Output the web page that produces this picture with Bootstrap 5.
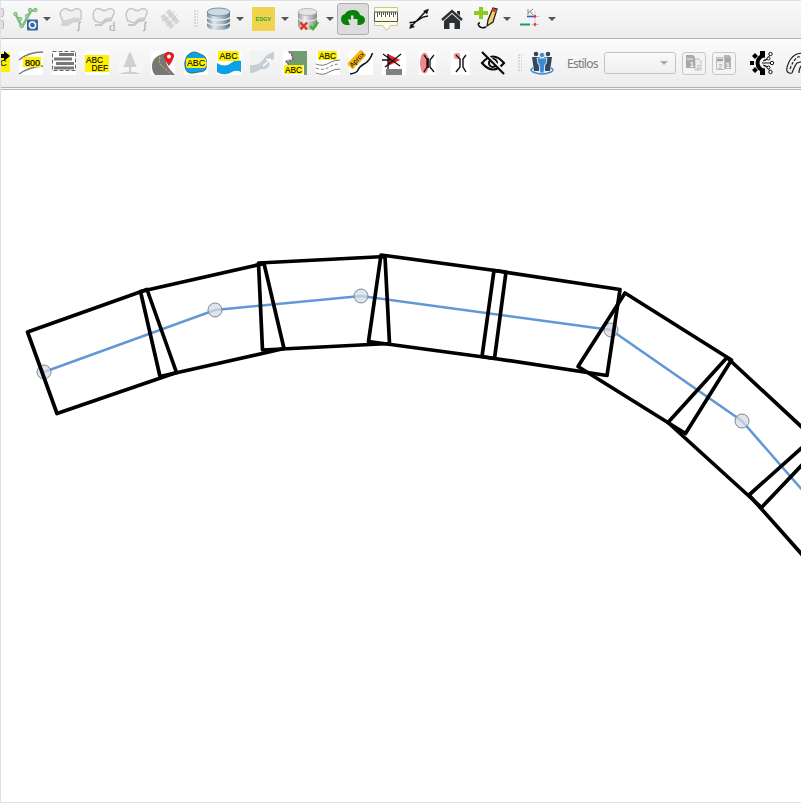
<!DOCTYPE html>
<html lang="pt">
<head>
<meta charset="utf-8">
<title>Mapa</title>
<link href="https://cdn.jsdelivr.net/npm/bootstrap@5.3.0/dist/css/bootstrap.min.css" rel="stylesheet">
<style>
body{width:801px;height:803px;overflow:hidden;background:#fff;font-family:"Noto Sans","Open Sans",sans-serif}
.frame{height:803px;border:solid #dee2e6;border-width:1px 0 1px 1px}
.bar{background:linear-gradient(#fafafa,#ececec);border-bottom:1px solid #b3b3b3;white-space:nowrap}
.bar-a{height:38px;padding-bottom:1px}
.bar-b{height:49px;background:linear-gradient(#fbfbfb,#ededed)}
.rule{height:2px;background:#f6f6f6;border-bottom:1px solid #b3b3b3}
.bar svg{display:block;flex:none;overflow:visible}
.slot{width:33px;flex:none}
.drop{width:45px;flex:none}
.drop::after{content:"";border:4px solid transparent;border-top:4px solid #555;border-bottom:0;margin-left:5px}
.drop-far{padding-left:1px}
.grip{height:18px;width:4px;flex:none;background:radial-gradient(circle at 1px 1px,#b5b5b5 0.6px,transparent 0.8px) 0 0/3px 3px}
.lead-a{width:13px;flex:none}
.lead-b{margin-left:-15px}
.grip-a{margin:0 9px 0 3px}
.grip-b{margin:0 8px 0 4px}
.pressed{width:32px;height:32px;flex:none;border:1px solid #b0b0b0;border-radius:3px;background:#dcdcdc;margin:0 5px 0 -5px}
.tool-label{font-size:12px;color:#777b84;width:37px;letter-spacing:-.75px;line-height:16px;padding-top:1px;flex:none}
.combo{width:72px;height:22px;flex:none;border:1px solid #c3c3c3;border-radius:3px;background:linear-gradient(#fafafa,#efefef);padding-right:7px}
.combo::after{content:"";border:4px solid transparent;border-top:4px solid #aaa;border-bottom:0}
.sq{width:24px;height:23px;flex:none;border:1px solid #c8c8c8;border-radius:3px;margin-left:6px;background:#f4f4f4}
.canvas{display:block}
text{font-family:"Liberation Sans",sans-serif}
</style>
<script src="https://cdn.jsdelivr.net/npm/bootstrap@5.3.0/dist/js/bootstrap.bundle.min.js"></script>
</head>
<body>
<main class="frame overflow-hidden">
<div class="bar bar-a d-flex align-items-center overflow-hidden">
 <div class="lead-a"><svg width="4" height="24" fill="#e0e0e0" stroke="#bbb"><path d="M0 1.500h1.500q1 0 1 1v6q0 1-1 1H0M0 13.500h1.500q1 0 1 1v6q0 1-1 1H0"/></svg></div>
 <div class="drop d-flex align-items-center"><svg width="24" height="24"><g fill="none" stroke="#7fbd82" stroke-width="2.600"><path d="M2 8l6 12M8 20l6-11 3-5 5-1"/><g fill="#c4e2c6" stroke-width="1.300"><circle cx="1.500" cy="7" r="1.500"/><circle cx="6" cy="12" r="1.500"/><circle cx="7.500" cy="19" r="1.500"/><circle cx="13" cy="9" r="1.500"/><circle cx="16" cy="3" r="1.500"/><circle cx="21.500" cy="3" r="1.500"/></g></g><rect x="13" y="12.500" width="11" height="11" rx="1" fill="#3767a3"/><path d="M15.500 20v-3.500l1.500-1.500h3l1 2M21.500 16v3.500l-1.500 1.500h-3l-1-1.500" fill="none" stroke="#fff" stroke-width="1.500"/></svg></div>
 <div class="slot"><svg width="24" height="24"><path d="M2 4Q5 0 9 2.500t7-.5q7-1 6 4 1 6-2 8l-7 1-4 3H3q2-3 0-6-3-4-1-8z" fill="#f0f0f0" stroke="#c6c6c6" stroke-width="1.500"/><path d="M4 13q6 0 9-2 3-1 8 0l-1 3-7 1-4 3H3z" fill="#d4d4d4"/><path d="M22 15.500q-2-1-2 2v4q0 2.500-2 2" fill="none" stroke="#aaa" stroke-width="1.200"/></svg></div>
 <div class="slot"><svg width="24" height="24"><path d="M2 4Q5 0 9 2.500t7-.5q7-1 6 4l-2 5-6 1-5 4-6-2Q0 9 2 4z" fill="#f2f2f2" stroke="#c6c6c6" stroke-width="1.500"/><path d="M3 18l6 0 5-4 6-1" fill="none" stroke="#c6c6c6" stroke-width="2"/><text x="17" y="24" font-size="13" style="font-family:'Liberation Serif',serif" fill="#aaa">d</text></svg></div>
 <div class="slot"><svg width="24" height="24"><path d="M2 4Q5 0 9 2.500t7-.5q7-1 6 4l-2 5-6 1-5 4-6-2Q0 9 2 4z" fill="#f2f2f2" stroke="#c6c6c6" stroke-width="1.500"/><path d="M3 18l6 0 5-4 6-1" fill="none" stroke="#c6c6c6" stroke-width="2"/><path d="M22 15.500q-2-1-2 2v4q0 2.500-2 2" fill="none" stroke="#aaa" stroke-width="1.200"/></svg></div>
 <div class="slot"><svg width="24" height="24"><g transform="translate(1 0) rotate(-40 11 12)"><path d="M5 4h5v16H5zM12 4h5v16h-5z" fill="#d6d7d4"/><path d="M3 8l8 2 9-1M3 15l8 0 8-2" fill="none" stroke="#c6c8c3" stroke-width=".8"/></g></svg></div>
 <div class="grip grip-a"></div>
 <div class="drop d-flex align-items-center"><svg width="24" height="24"><defs><linearGradient id="db"><stop stop-color="#758b9b"/><stop offset=".3" stop-color="#dfe8ed"/><stop offset=".65" stop-color="#a7b9c4"/><stop offset="1" stop-color="#5a7080"/></linearGradient></defs><path d="M0 5v14q1 4 11.500 4T23 19V5z" fill="url(#db)"/><path d="M0 10q1 3 11.500 3T23 10M0 15q1 3 11.500 3T23 15" fill="none" stroke="#e7eef2" stroke-width="1.300"/><ellipse cx="11.500" cy="5" rx="11.300" ry="4" fill="#cbdbe4" stroke="#7c919f"/></svg></div>
 <div class="drop d-flex align-items-center"><svg width="24" height="24"><rect width="23" height="24" fill="#f0d44e"/><text x="3.500" y="14" font-size="5.500" font-weight="700" fill="#2da33a" textLength="15.500">EDGV</text></svg></div>
 <div class="drop d-flex align-items-center"><svg width="24" height="24"><defs><linearGradient id="dg"><stop stop-color="#999"/><stop offset=".35" stop-color="#eee"/><stop offset="1" stop-color="#888"/></linearGradient></defs><g transform="translate(1)"><path d="M0 5v14q1 4 9.500 4T19 19V5z" fill="url(#dg)"/><path d="M0 11q1 3 9.500 3t9.500-3" fill="none" stroke="#f2f2f2"/><ellipse cx="9.500" cy="5" rx="9.500" ry="3.500" fill="#e4e4e4" stroke="#aaa" stroke-width=".8"/><path d="M2.500 15.500l6.500 7M9 15.500l-6.500 7" stroke="#e2351c" stroke-width="2.500"/><path d="M12 19l3 3 5-7" stroke="#3fb52a" stroke-width="2.500" fill="none"/></g></svg></div>
 <div class="pressed d-flex align-items-center justify-content-center"><svg width="24" height="24"><path d="M5 18q-5-1-5-6 0-4 4-5Q6 3 12 3q6 0 7 5 5 1 5 5 0 4-5 5z" fill="#078207"/><path d="M9 21v-3l-2-5 1-1 2 1V8.500h2.500V12h4v5l-1 4z" fill="#dcdcdc"/></svg></div>
 <div class="slot"><svg width="24" height="24"><path d="M.5.500h23v18h-7l-4 5-4-5h-8z" fill="#ffffdf" stroke="#c5c5a0"/><path d="M.5 5h23v9.500H.500z" fill="#fffff0" stroke="#555"/><path d="M3.500 5v5M5.500 5v3M7.500 5v5M9.500 5v3M11.500 5v5M13.500 5v3M15.500 5v5M17.500 5v3M19.500 5v5M21.500 5v3" stroke="#555"/></svg></div>
 <div class="slot"><svg width="24" height="24" fill="none" stroke="#111" stroke-width="1.500"><path d="M4 20q2-3 6-6.500L19 4M2.500 15.500q6 0 9.500-3t9-3.500"/><path d="M21.500 2l-5 2 3.500 3zM2.500 21.500l1.500-5 3.500 3.500z" fill="#111" stroke-width=".4"/></svg></div>
 <div class="slot"><svg width="24" height="24"><path d="M2 13L12 4l10 9" fill="none" stroke="#2b2f33" stroke-width="2.400"/><path d="M4 14l8-7 8 7v8h-5.500v-6h-5v6H4zM17 4h3v5l-3-3z" fill="#2b2f33"/></svg></div>
 <div class="drop drop-far d-flex align-items-center"><svg width="24" height="24"><path d="M13 19l1-6 5-12 4 1-4 13z" fill="#f4cf62" stroke="#222" stroke-width="1.300"/><path d="M19 1l4 2-1 3-4-2z" fill="#c84837"/><path d="M12 20q-5 2-7-1t1-3" fill="none" stroke="#111" stroke-width="1.500"/><path d="M5 0h4v4h5v4H9v4H5V8H0V4h5z" fill="#8bcb22"/></svg></div>
 <div class="drop drop-far d-flex align-items-center"><svg width="24" height="24"><path d="M9 2v6M14 2l-5 4M11 4l3 4" stroke="#888" stroke-width="1"/><path d="M8 9.500h8" stroke="#2358ed" stroke-width="1.600"/><path d="M16 9.500h5M16 4v16M12 17.500h8" stroke="#bbb" stroke-width=".7"/><circle cx="16" cy="9.500" r="1.400" fill="#ef3344"/><circle cx="16" cy="17.500" r="1.400" fill="#ef3344"/><path d="M1 17.500h10" stroke="#169d70" stroke-width="2"/></svg></div>
</div>

<div class="bar bar-b d-flex align-items-center overflow-hidden">
 <div class="slot lead-b"><svg width="24" height="24"><rect y="2" width="24" height="19" fill="#fff000"/><text x="14" y="15" font-size="9.500">C</text><path d="M14 3h4V0l6 5-6 5V7h-4z"/></svg></div>
 <div class="slot"><svg width="24" height="24"><rect width="24" height="24" fill="#fff"/><path d="M0 9Q9 1 24 1M0 23q10-7 24-8" fill="none" stroke="#777" stroke-width="1.500"/><rect x="4" y="6" width="18" height="10" fill="#fff000"/><text x="6" y="14.500" font-size="9" textLength="15" stroke="#000" stroke-width=".2">800</text></svg></div>
 <div class="slot"><svg width="24" height="24"><rect width="24" height="24" fill="#fff"/><rect x=".5" y=".5" width="23" height="19" fill="none" stroke="#666" stroke-dasharray="4 2"/><path d="M7 3.500h15M2 8h18M4 12.500h18M2 17h20" stroke="#777" stroke-width="2.800"/></svg></div>
 <div class="slot"><svg width="24" height="24"><rect width="24" height="24" fill="#fff"/><rect x="0" y="4" width="24" height="17" fill="#fff000"/><text x="1" y="11.800" font-size="8.300" textLength="17" lengthAdjust="spacingAndGlyphs" stroke="#000" stroke-width=".1">ABC</text><text x="6.500" y="20.200" font-size="8.300" textLength="16.500" lengthAdjust="spacingAndGlyphs" stroke="#000" stroke-width=".1">DEF</text></svg></div>
 <div class="slot"><svg width="24" height="24"><rect width="24" height="24" fill="#f6f6f6"/><path d="M12 1l3 5h-1l3 5h-1l3 5h-6v5h-2v-5H5l3-5H7l3-5H9zM0 23q12-5 24 0z" fill="#cbd1ce"/></svg></div>
 <div class="slot"><svg width="24" height="24"><rect width="24" height="24" fill="#fff"/><path d="M15 2Q1 5 1 15q0 6 3 9h20q-8-8-9-13z" fill="#777"/><path d="M9 6q-2 6 3 10t8 8" fill="none" stroke="#ddcc24" stroke-dasharray="2 1.500"/><path d="M18 15q-6-8-5-11 2-4 6-3 5 1 4 5-2 5-5 9z" fill="#e31c25"/><circle cx="18" cy="5.500" r="2" fill="#fff"/></svg></div>
 <div class="slot"><svg width="24" height="24"><rect width="24" height="24" fill="#fff"/><path d="M3 5q6-7 13-2 8 2 6 10 2 8-7 8-11 3-13-2-3-7 1-14z" fill="#0ca1e5" stroke="#345" stroke-width=".7"/><rect x="2" y="7" width="20" height="10" rx="2" fill="#fff000"/><text x="3" y="15.200" font-size="9" textLength="18" lengthAdjust="spacingAndGlyphs" stroke="#000" stroke-width=".1">ABC</text></svg></div>
 <div class="slot"><svg width="24" height="24"><rect width="24" height="24" fill="#fff"/><path d="M0 12q8 5 14 0 5-4 10-2v11q-5-3-11 1-7 3-13-1z" fill="#0ca1e5"/><rect x="1" y="0" width="21" height="10" rx="1" fill="#fff000"/><text x="2.500" y="8.200" font-size="9" textLength="18" lengthAdjust="spacingAndGlyphs" stroke="#000" stroke-width=".1">ABC</text></svg></div>
 <div class="slot"><svg width="24" height="24"><rect width="24" height="24" fill="#f2f2f2"/><path d="M0 14q9 1 13-5 3-6 11-8v7q-4 1-5 7-3 4-8 3-5 4-11 4z" fill="#c7ced3"/><path d="M13 15l7-6M16 8.500h4.500v4.500" fill="none" stroke="#fff" stroke-width="1.500"/></svg></div>
 <div class="slot"><svg width="24" height="24"><rect width="24" height="24" fill="#fff"/><path d="M6 0h18v24h-3V14H7q-3 0-4-4l4 0 3-2-2-5z" fill="#719c6d"/><path d="M6 0q0 3 3 3-1 3 1 5-2 2-4 1-2 0-3 2l3 3" fill="none" stroke="#87518d" stroke-width="1.200" stroke-dasharray="3 1"/><rect x="1" y="14" width="19" height="9" rx="1" fill="#fff000"/><text x="2" y="22" font-size="9" textLength="17" lengthAdjust="spacingAndGlyphs" stroke="#000" stroke-width=".1">ABC</text></svg></div>
 <div class="slot"><svg width="24" height="24"><rect width="24" height="24" fill="#fff"/><path d="M0 13q7 3 13-1 5-3 11-3M0 22q7 3 13-1 5-3 11-3" fill="none" stroke="#777"/><path d="M0 17q7 3 13-1 5-3 11-3" fill="none" stroke="#777" stroke-dasharray="3 2"/><rect x="2" y="0" width="19" height="9" rx="1" fill="#fff000"/><text x="3" y="8" font-size="9" textLength="17" lengthAdjust="spacingAndGlyphs" stroke="#000" stroke-width=".1">ABC</text></svg></div>
 <div class="slot"><svg width="24" height="24"><rect width="24" height="24" fill="#fff"/><path d="M1 23q7-1 8-4 1-3 6-6 6-3 8.500-11" fill="none" stroke="#111" stroke-width="1.500"/><g transform="translate(4 16) rotate(-46)"><rect x="-2" y="-6.500" width="20" height="8" rx="1.500" fill="#f6b719"/><text x="-1" y="0" font-size="7" textLength="18" lengthAdjust="spacingAndGlyphs">Aprox</text></g></svg></div>
 <div class="slot"><svg width="24" height="24"><rect width="24" height="24" fill="#fff"/><path d="M6 3l12 6-12 6z" fill="#ef1c24"/><path d="M6 3v15M1 3l17 12M19 3L3 16M0 9h8" stroke="#111" stroke-width="1.300"/><path d="M4 18h16v6H4z" fill="#808080"/></svg></div>
 <div class="slot"><svg width="24" height="24"><rect x="4" width="17" height="24" fill="#fff"/><ellipse cx="9.500" cy="12" rx="4.500" ry="10.500" fill="#f2868a"/><path d="M9 4l3 4v8l-3 5M19 4l-4 5v7l4 5M13.200 7v10" fill="none" stroke="#111" stroke-width="1.300"/></svg></div>
 <div class="slot"><svg width="24" height="24"><rect x="3" width="19" height="24" fill="#fff"/><circle cx="9" cy="5" r="3.300" fill="#f5989b"/><path d="M8 4l4 4v8l-4 5M18 4l-3 4v8l3 5" fill="none" stroke="#111" stroke-width="1.400"/></svg></div>
 <div class="slot"><svg width="24" height="24" fill="none" stroke="#080808" stroke-width="2.100"><path d="M1 12Q12-1 23 12 12 25 1 12z"/><circle cx="12" cy="12" r="4"/><path d="M3 1l21 20" stroke="#f4f4f4" stroke-width="2"/><path d="M1 1l22 22"/></svg></div>
 <div class="grip grip-b"></div>
 <svg width="37" height="24"><g fill="#31485e"><circle cx="6" cy="3" r="2.300"/><circle cx="18" cy="3" r="2.300"/><path d="M2 6h8v7l-1 7H4l-1-7zM14 6h8l-1 7-1 7h-5z"/></g><circle cx="12" cy="4" r="2.500" fill="#3b8bd0" stroke="#fff" stroke-width=".5"/><path d="M7 7h10l-1 6h-1l-1 9h-4l-1-9H8z" fill="#3b8bd0" stroke="#f4f4f4" stroke-width=".8"/><path d="M3 17q-4 2 0 4 9 4 18 0 4-2 0-4" fill="none" stroke="#3b8bd0" stroke-width="1.400"/></svg>
 <span class="tool-label">Estilos</span>
 <div class="combo d-flex align-items-center justify-content-end"></div>
 <div class="sq d-flex align-items-center justify-content-center"><svg width="18" height="18"><path d="M10 5h4l2 2v9h-6z" fill="#eee" stroke="#c0c0c0"/><path d="M1 1h7l2 2v11H1z" fill="#a9a9a9"/><path d="M2 5h6" stroke="#c8c8c8" stroke-width="2.500"/><text x="5" y="13" font-size="6.500" fill="#fff" font-weight="700">1</text><text x="11.500" y="14.500" font-size="6" fill="#aaa">2</text></svg></div>
 <div class="sq d-flex align-items-center justify-content-center"><svg width="18" height="18"><path d="M9 1h5l2 2v12H9z" fill="#b3b3b3"/><path d="M1.500 3.500h8v12h-8z" fill="#eee" stroke="#c0c0c0"/><path d="M2 6h6M10 6h5" stroke="#a0a0a0" stroke-width="2.500"/><text x="3.500" y="14.500" font-size="6.500" fill="#999">2</text><text x="11" y="14" font-size="6.500" fill="#fff" font-weight="700">1</text></svg></div>
 <svg class="ms-3" width="34" height="24"><g transform="translate(-2)"><path d="M15 2.500a9.500 9.500 0 1 0 0 19v-4a5.500 5.500 0 1 1 0-11z"/><path d="M10 0h5v4h-5zM10 20h5v4h-5zM0 10h4v4H0zM2 5l3-3 3 3-3 3zM2 19l3 3 3-3-3-3z"/><path d="M14 9h2l4-5M12 12h9M14 15h2l4 5M13 10l5-2M13 14l5 2" stroke="#111" stroke-width="1" fill="none"/><g fill="#fff" stroke="#111"><circle cx="20.500" cy="3" r="1.700"/><circle cx="18.500" cy="7.500" r="1.500"/><circle cx="22" cy="12" r="1.700"/><circle cx="18.500" cy="16.500" r="1.500"/><circle cx="20.500" cy="21" r="1.700"/></g></g></svg>
 <svg width="24" height="24"><g fill="none" stroke="#222" stroke-width="1.200"><path d="M1 20Q0 17 3 11T11 3L24 0M6 22q3-8 5-10l13-4M1 20q1 3 5 2M13 22q0-7 5-9h6"/><path d="M4 18q3-9 8-12l12-3" stroke-dasharray="3 1.500"/></g></svg>
</div>
<div class="rule"></div>

<svg class="canvas" width="800" height="712" viewBox="1 90 800 712">
 <path d="M44 372L215 310 361 296 611 330 742 421 810 499" fill="none" stroke="#6298d6" stroke-width="2.500"/>
 <g fill="#d9d9e3" fill-opacity=".75" stroke="#6f8f9b" stroke-width="1"><circle cx="44" cy="372" r="7"/><circle cx="215" cy="310" r="7"/><circle cx="361" cy="296" r="7"/><circle cx="611" cy="330" r="7"/><circle cx="742" cy="421" r="7"/></g>
 <g fill="none" stroke="#000" stroke-width="3.700" stroke-linejoin="round">
  <path d="M27.500 332L147 289.500 176.500 372.500 57 413.500z"/>
  <path d="M140.500 291.500L264 263.500 284 348.500 160 376.500z"/>
  <path d="M258.500 263L385 256.500 389.500 343.500 262.500 350z"/>
  <path d="M381 255L506 272 494.500 358.500 368.500 341.500z"/>
  <path d="M494 270.500L620 289.500 607 375.500 482 356.500z"/>
  <path d="M625 293L731.500 360 685.500 433.500 578 366.500z"/>
  <path d="M727 357.500L821 445 761.500 507.500 668 422.500z"/>
  <path d="M749 495L815 436 905 537 839 596z"/>
 </g>
</svg>
</main>
</body>
</html>
